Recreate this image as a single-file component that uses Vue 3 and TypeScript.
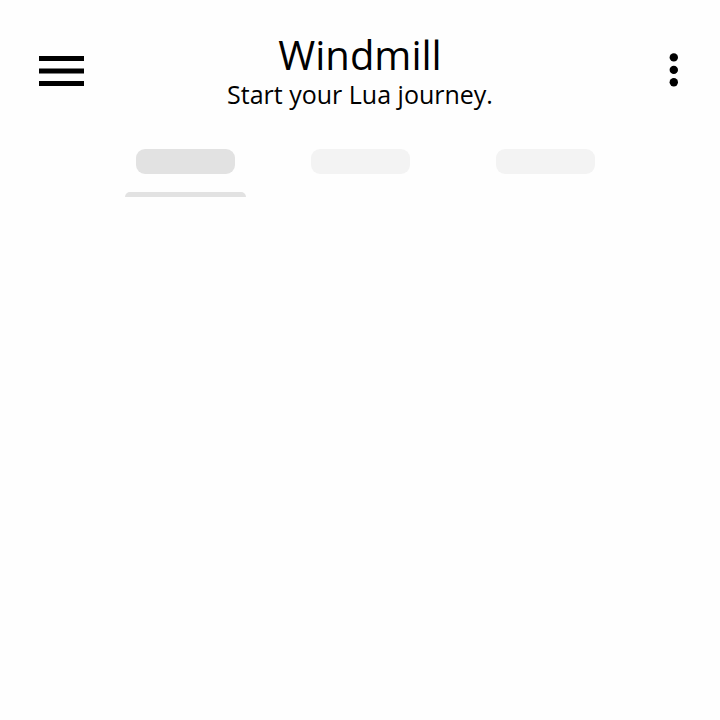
<script setup lang="ts">
import { ref } from 'vue'

const tabs: string[] = ['First tab', 'Second tab', 'Third tab']
const selected = ref<number>(0)
</script>

<template>
  <main class="screen">
    <header class="bar">
      <button class="icon-button" type="button" aria-label="Open navigation">
        <svg class="menu" viewBox="0 0 45 30" aria-hidden="true">
          <path d="M0 0h45v5H0zM0 12.5h45v5H0zM0 25h45v5H0z" />
        </svg>
      </button>
      <div class="titles">
        <h1>Windmill</h1>
        <p>Start your Lua journey.</p>
      </div>
      <button class="icon-button end" type="button" aria-label="More options">
        <svg class="more" viewBox="0 0 14 36" aria-hidden="true">
          <circle cx="6.8" cy="4.4" r="4.2" />
          <circle cx="6.8" cy="16.9" r="4.2" />
          <circle cx="6.8" cy="29.2" r="4.2" />
        </svg>
      </button>
    </header>
    <nav class="tabs" aria-label="Sections">
      <button
        v-for="(tab, index) in tabs"
        :key="tab"
        type="button"
        class="tab"
        :class="{ active: selected === index }"
        :aria-label="tab"
        @click="selected = index"
      >
        <span class="placeholder"></span>
        <span class="indicator"></span>
      </button>
    </nav>
  </main>
</template>

<style>
body {
  background: #fefefe;
}
</style>

<style scoped>
.screen {
  color: #000;
  font-family: "Open Sans", "Noto Sans", sans-serif;
}
.bar {
  display: grid;
  grid-template-columns: 1fr auto 1fr;
  align-items: center;
  padding: 30px 39px 0;
}
.icon-button {
  display: flex;
  justify-self: start;
  padding: 0;
  border: 0;
  background: none;
  cursor: pointer;
}
.end {
  justify-self: end;
}
.menu {
  width: 45px;
  height: 30px;
}
.more {
  width: 14px;
  height: 36px;
}
.titles {
  padding-bottom: 4px;
  text-align: center;
}
h1,
p {
  margin: 0;
  font-weight: 400;
}
h1 {
  font-size: 40px;
  line-height: 50px;
}
p {
  font-size: 25px;
  line-height: 28px;
}
.tabs {
  display: grid;
  grid-template-columns: 175fr 185fr 121fr;
  justify-items: start;
  padding: 37px 114px 0 125px;
}
.tab {
  display: flex;
  flex-direction: column;
  align-items: center;
  gap: 18px;
  padding: 0;
  border: 0;
  background: none;
  cursor: pointer;
}
.placeholder {
  width: 99px;
  height: 25px;
  border-radius: 9px;
  background: #f3f3f3;
}
.indicator {
  width: 121px;
  height: 5px;
  border-radius: 6px 6px 0 0;
}
.active .placeholder,
.active .indicator {
  background: #e2e2e2;
}
</style>
